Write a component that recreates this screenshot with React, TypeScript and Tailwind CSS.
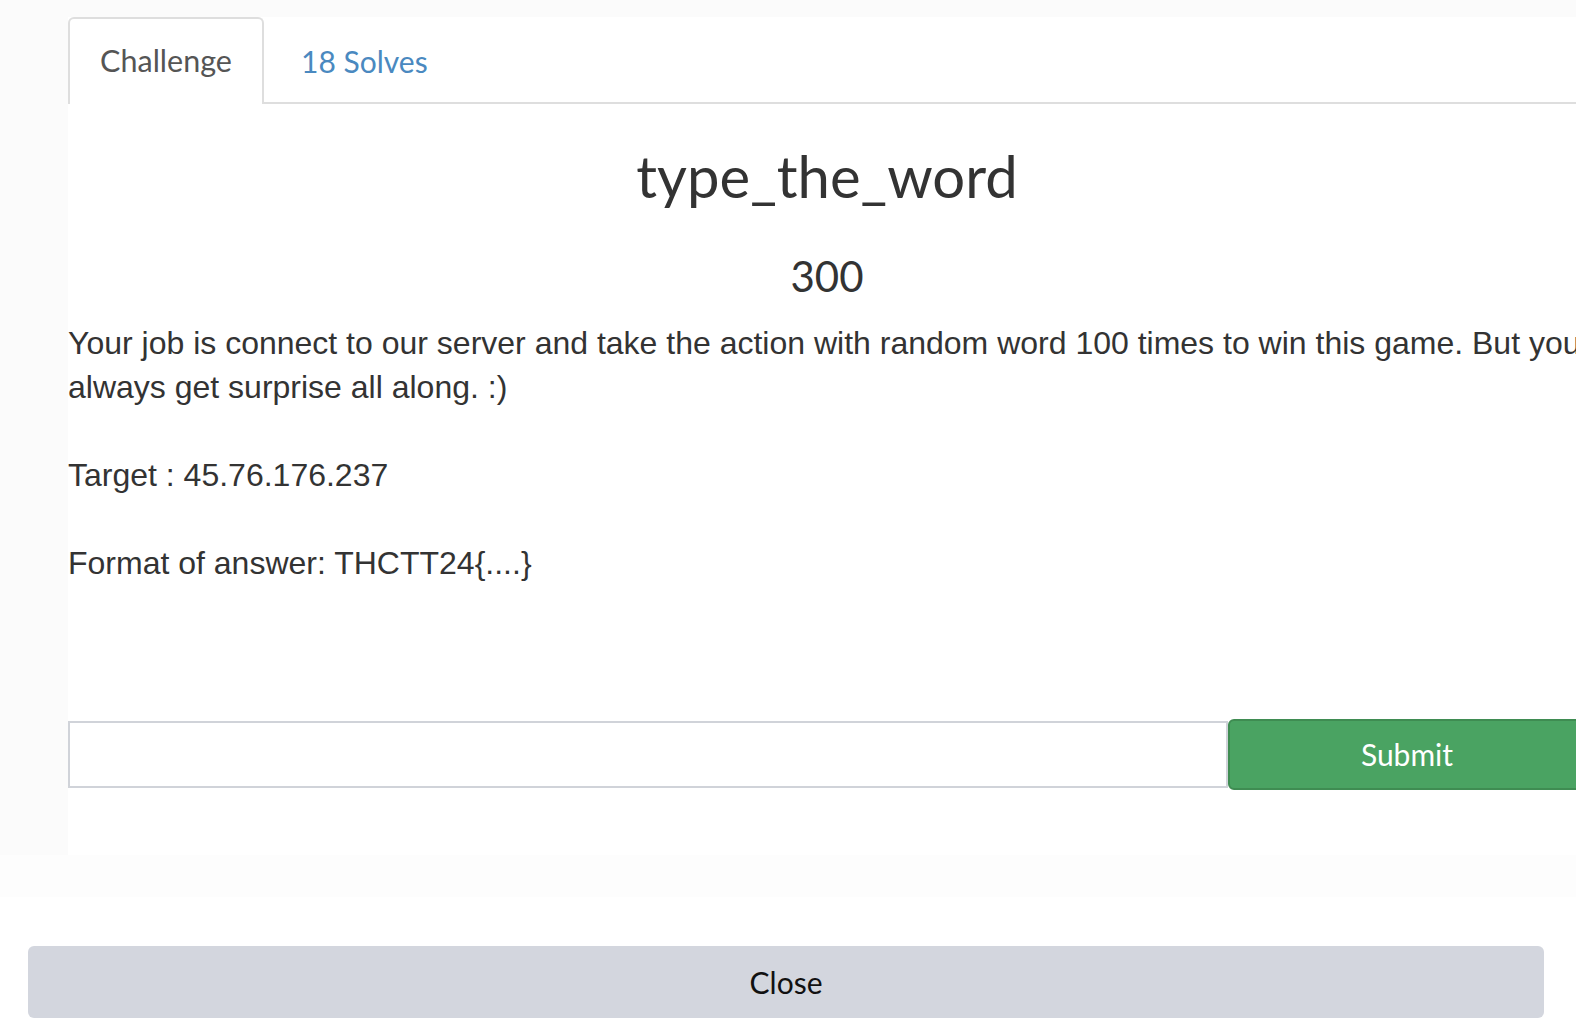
import { useState } from "react";

const heading = { fontFamily: "Lato, 'Noto Sans', sans-serif" };
const body = { fontFamily: "'Liberation Sans', Arial, sans-serif" };

export default function App() {
  const [flag, setFlag] = useState("");

  return (
    <div className="w-[1576px] h-[1036px] overflow-hidden bg-white">
      <div className="bg-[#fbfbfb] pt-[17px] pl-[68px]">
        <div className="w-[1518px]">
          {/* tabs */}
          <ul className="flex h-[87px] border-b-2 border-[#dedede] bg-white" style={heading}>
            <li className="-mb-[2px] flex h-[87px] w-[196px] items-center justify-center rounded-t-[6px] border-2 border-b-0 border-[#dedede] bg-white pb-[2px] text-[30.5px] text-[#555]">
              Challenge
            </li>
            <li className="flex h-[85px] items-center pt-[4px] pl-[37px] text-[30px] text-[#4a89c0]">18 Solves</li>
          </ul>

          {/* tab content */}
          <div className="flex h-[751px] flex-col bg-white">
            <h3 className="mt-[43px] text-center text-[58px] leading-none text-[#333]" style={heading}>
              type_the_word
            </h3>
            <h4 className="mt-[50px] text-center text-[42px] leading-none text-[#333]" style={heading}>
              300
            </h4>
            <div className="mt-[24px] text-[32px] leading-[44px] text-[#333] whitespace-nowrap" style={body}>
              <p>Your job is connect to our server and take the action with random word 100 times to win this game. But you</p>
              <p>always get surprise all along. :)</p>
              <p>&nbsp;</p>
              <p>Target : 45.76.176.237</p>
              <p>&nbsp;</p>
              <p>Format of answer: THCTT24&#123;....&#125;</p>
            </div>
            <form className="mt-[134px] flex items-center" onSubmit={(e) => e.preventDefault()}>
              <input
                value={flag}
                onChange={(e) => setFlag(e.target.value)}
                className="h-[67px] w-[1160px] border-2 border-[#d0d3d9] bg-white px-4 text-[30px] outline-none"
                style={body}
              />
              <button
                type="submit"
                className="h-[71px] w-[358px] rounded-[6px] border-2 border-[#3f8c52] bg-[#4aa362] text-[30px] text-white"
                style={heading}
              >
                Submit
              </button>
            </form>
          </div>
        </div>
      </div>

      <div className="h-[42px] bg-[#fdfdfd]" />

      <div className="px-[28px] pt-[49px]">
        <button
          className="flex h-[72px] w-[1516px] items-center justify-center rounded-[6px] bg-[#d3d6de] text-[30px] text-[#111]"
          style={heading}
        >
          Close
        </button>
      </div>
    </div>
  );
}
